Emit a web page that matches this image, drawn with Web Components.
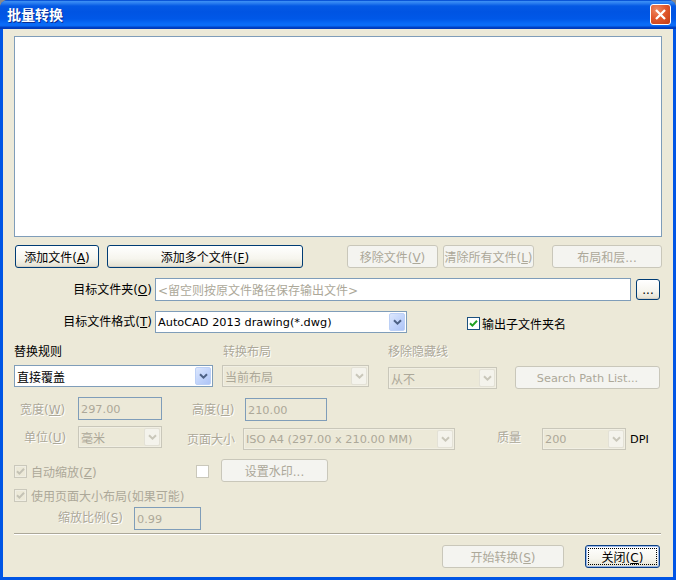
<!DOCTYPE html>
<html lang="zh">
<head>
<meta charset="utf-8">
<title>批量转换</title>
<style>
html,body{margin:0;padding:0;background:#8a8a8a;}
body{width:676px;height:580px;overflow:hidden;font:12px "DejaVu Sans","Noto Sans CJK SC",sans-serif;}
</style>
</head>
<body>
<batch-dialog></batch-dialog>
<script>
const FONT='"DejaVu Sans","Noto Sans CJK SC",sans-serif';
const CJK='"Noto Sans CJK SC","DejaVu Sans",sans-serif';

class XpWindow extends HTMLElement{
    constructor(){
        super();
        this.attachShadow({mode:'open'}).innerHTML=`
        <style>
        :host{display:block;width:676px;height:580px;}
        .frame{display:flex;flex-direction:column;height:100%;border-radius:8px 8px 0 0;overflow:hidden;background:#0055e5;}
        .title{flex:none;height:29px;box-sizing:border-box;display:flex;align-items:center;justify-content:space-between;padding:0 5px 1px 7px;
            background:linear-gradient(180deg,#0a55d8 0,#0a55d8 1px,#3d90f6 1px,#2c7ff0 3px,#0459e4 6px,#0054e3 12px,#0058e8 19px,#0a6cf8 24px,#0a6af4 26px,#0043c8 27px,#0038b8 29px);}
        .caption{font:bold 14px ${CJK};color:#fff;text-shadow:1px 1px 0 #0b2d92;line-height:16px;}
        .close{width:21px;height:21px;box-sizing:border-box;border:1px solid #fff;border-radius:3px;display:flex;align-items:center;justify-content:center;
            background:radial-gradient(circle at 30% 25%,#ee8a64 0,#e2592e 45%,#c23c14 100%);}
        .body{flex:1;margin:0 3px 3px;background:#ece9d8;min-height:0;}
        </style>
        <div class="frame">
            <div class="title">
                <span class="caption"><slot name="caption"></slot></span>
                <span class="close"><svg width="13" height="13" viewBox="0 0 13 13"><path d="M2 2 L11 11 M11 2 L2 11" stroke="#fff" stroke-width="2.3" fill="none"/></svg></span>
            </div>
            <div class="body"><slot></slot></div>
        </div>`;
    }
}
customElements.define('xp-window',XpWindow);

class XpButton extends HTMLElement{
    constructor(){
        super();
        this.attachShadow({mode:'open'}).innerHTML=`
        <style>
        :host{display:block;flex:none;box-sizing:border-box;height:23px;border:1px solid #003c74;border-radius:3px;
            background:linear-gradient(180deg,#fff 0,#f6f5ee 60%,#e3e0d0 100%);color:#000;
            box-shadow:inset 0 -1px 0 #d6d0c5;}
        :host([disabled]){border-color:#c9c7ba;background:#f4f4f0;color:#aca899;box-shadow:none;}
        :host([focused]){border-color:#0a3f84;box-shadow:inset 0 0 0 1px #9db9ea;}
        .in{display:flex;align-items:center;justify-content:center;height:100%;white-space:nowrap;font:12px ${FONT};}
        :host([focused]) .in{outline:1px dotted #000;outline-offset:-3px;}
        </style>
        <div class="in"><span><slot></slot></span></div>`;
    }
}
customElements.define('xp-button',XpButton);

class XpField extends HTMLElement{
    constructor(){
        super();
        this.attachShadow({mode:'open'}).innerHTML=`
        <style>
        :host{display:block;flex:none;box-sizing:border-box;height:23px;border:1px solid #7f9db9;background:#fff;color:#000;}
        :host([disabled]){background:#ece9d8;color:#aca899;}
        :host([hint]){color:#aca899;}
        .in{display:flex;align-items:center;height:100%;padding-left:2px;white-space:nowrap;font:12px ${FONT};}
        </style>
        <div class="in"><span><slot></slot></span></div>`;
    }
}
customElements.define('xp-field',XpField);

class XpSelect extends HTMLElement{
    constructor(){
        super();
        this.attachShadow({mode:'open'}).innerHTML=`
        <style>
        :host{display:block;flex:none;box-sizing:border-box;height:22px;border:1px solid #7f9db9;background:#fff;color:#000;padding:1px;}
        :host([disabled]){border-color:#c9c7ba;background:#ece9d8;color:#aca899;box-shadow:inset 0 0 0 1px #f1efe3;}
        .wrap{display:flex;height:100%;}
        .val{flex:1;display:flex;align-items:center;padding-left:1px;white-space:nowrap;overflow:hidden;font:12px ${FONT};}
        .btn{flex:none;width:16px;display:flex;align-items:center;justify-content:center;border:1px solid #bcd0f6;box-sizing:border-box;border-radius:2px;
            background:linear-gradient(135deg,#dce7fd 0,#c3d5fb 50%,#aec4f6 100%);color:#4d6185;}
        :host([disabled]) .btn{border-color:#e3e1d6;background:#f4f3ec;color:#c9c7ba;}
        </style>
        <div class="wrap">
            <div class="val"><span><slot></slot></span></div>
            <div class="btn"><svg width="9" height="7" viewBox="0 0 9 7"><path d="M1 1.2 L4.5 4.7 L8 1.2" fill="none" stroke="currentColor" stroke-width="2"/></svg></div>
        </div>`;
    }
}
customElements.define('xp-select',XpSelect);

class XpCheck extends HTMLElement{
    constructor(){
        super();
        this.attachShadow({mode:'open'}).innerHTML=`
        <style>
        :host{display:flex;flex:none;align-items:center;white-space:nowrap;font:12px ${FONT};color:#000;height:13px;}
        :host([disabled]){color:#aca899;}
        .box{flex:none;width:13px;height:13px;box-sizing:border-box;border:1px solid #1c5180;background:#fff;display:flex;align-items:center;justify-content:center;color:#21a121;}
        :host([disabled]) .box{border-color:#cac8bb;background:#ece9d8;color:#c4c2b5;box-shadow:inset 0 0 0 1px #f0eee3;}
        :host([blank]) .box{background:#fff;box-shadow:none;}
        .box svg{display:none;}
        :host([checked]) .box svg{display:block;}
        .txt{margin-left:var(--check-gap,4px);}
        :host([blank]) .txt{display:none;}
        </style>
        <span class="box"><svg width="9" height="9" viewBox="0 0 9 9"><path d="M1 4.2 L3.4 6.6 L8 1.8" fill="none" stroke="currentColor" stroke-width="2"/></svg></span>
        <span class="txt"><slot></slot></span>`;
    }
}
customElements.define('xp-check',XpCheck);

class XpLabel extends HTMLElement{
    constructor(){
        super();
        this.attachShadow({mode:'open'}).innerHTML=`
        <style>
        :host{display:block;flex:none;box-sizing:border-box;white-space:nowrap;font:12px ${FONT};color:#000;line-height:16px;}
        :host([disabled]){color:#aca899;text-shadow:1px 1px 0 #fff;}
        :host([end]){text-align:right;}
        </style>
        <slot></slot>`;
    }
}
customElements.define('xp-label',XpLabel);

class BatchDialog extends HTMLElement{
    constructor(){
        super();
        this.attachShadow({mode:'open'}).innerHTML=`
        <style>
        :host{display:block;}
        .form{display:flex;flex-direction:column;padding:7px 11px 0;}
        .row{display:flex;flex:none;align-items:flex-start;}
        .list{height:201px;width:648px;box-sizing:border-box;border:1px solid #7f9db9;background:#fff;}
        .rule{height:1px;width:647px;background:#aca899;border-bottom:1px solid #fff;margin-top:3px;}
        /* latin text is narrower than DejaVu at 12px in the reference */
        .en{font-size:11.3px;}
        </style>
        <xp-window>
            <span slot="caption">批量转换</span>
            <div class="form">
                <div class="list"></div>

                <div class="row" style="margin-top:8px;height:23px">
                    <xp-button style="width:84px;margin-left:1px">添加文件(<u>A</u>)</xp-button>
                    <xp-button style="width:196px;margin-left:8px">添加多个文件(<u>F</u>)</xp-button>
                    <xp-button disabled style="width:91px;margin-left:44px">移除文件(<u>V</u>)</xp-button>
                    <xp-button disabled style="width:91px;margin-left:5px">清除所有文件(<u>L</u>)</xp-button>
                    <xp-button disabled style="width:110px;margin-left:18px">布局和层...</xp-button>
                </div>

                <div class="row" style="margin-top:10px;height:23px;align-items:center">
                    <xp-label end style="width:138px">目标文件夹(<u>O</u>)</xp-label>
                    <xp-field hint style="width:476px;margin-left:3px">&lt;留空则按原文件路径保存输出文件&gt;</xp-field>
                    <xp-button style="width:24px;height:21px;margin-left:5px">...</xp-button>
                </div>

                <div class="row" style="margin-top:10px;height:22px;align-items:center">
                    <xp-label end style="width:138px">目标文件格式(<u>T</u>)</xp-label>
                    <xp-select style="width:252px;margin-left:3px"><span class="en">AutoCAD 2013 drawing(*.dwg)</span></xp-select>
                    <xp-check checked style="margin-left:60px;margin-top:2px;--check-gap:2px">输出子文件夹名</xp-check>
                </div>

                <div class="row" style="margin-top:11px;height:16px">
                    <xp-label style="width:209px">替换规则</xp-label>
                    <xp-label disabled style="width:165px">转换布局</xp-label>
                    <xp-label disabled>移除隐藏线</xp-label>
                </div>

                <div class="row" style="margin-top:5px;height:24px">
                    <xp-select style="width:199px">直接覆盖</xp-select>
                    <xp-select disabled style="width:147px;margin-left:9px">当前布局</xp-select>
                    <xp-select disabled style="width:109px;margin-left:19px;margin-top:2px">从不</xp-select>
                    <xp-button disabled style="width:145px;margin-left:18px;margin-top:1px"><span class="en">Search Path List...</span></xp-button>
                </div>

                <div class="row" style="margin-top:8px;height:24px">
                    <xp-label disabled style="width:58px;margin-left:6px;margin-top:5px">宽度(<u>W</u>)</xp-label>
                    <xp-field disabled style="width:84px"><span class="en">297.00</span></xp-field>
                    <xp-label disabled style="width:53px;margin-left:30px;margin-top:5px">高度(<u>H</u>)</xp-label>
                    <xp-field disabled style="width:82px;margin-top:1px"><span class="en">210.00</span></xp-field>
                </div>

                <div class="row" style="margin-top:5px;height:24px">
                    <xp-label disabled style="width:54px;margin-left:10px;margin-top:4px">单位(<u>U</u>)</xp-label>
                    <xp-select disabled style="width:84px">毫米</xp-select>
                    <xp-label disabled style="width:56px;margin-left:25px;margin-top:6px">页面大小</xp-label>
                    <xp-select disabled style="width:212px;margin-top:2px"><span class="en">ISO A4 (297.00 x 210.00 MM)</span></xp-select>
                    <xp-label disabled style="width:45px;margin-left:42px;margin-top:4px">质量</xp-label>
                    <xp-select disabled style="width:84px;margin-top:2px"><span class="en">200</span></xp-select>
                    <xp-label style="margin-left:4px;margin-top:5px"><span class="en">DPI</span></xp-label>
                </div>

                <div class="row" style="margin-top:9px;height:25px">
                    <xp-check disabled checked style="width:182px;margin-top:6px">自动缩放(<u>Z</u>)</xp-check>
                    <xp-check disabled blank style="margin-top:6px"></xp-check>
                    <xp-button disabled style="width:107px;margin-left:12px">设置水印...</xp-button>
                </div>

                <div class="row" style="height:23px">
                    <xp-check disabled checked style="margin-top:5px">使用页面大小布局(如果可能)</xp-check>
                </div>

                <div class="row" style="height:23px">
                    <xp-label disabled style="width:76px;margin-left:44px;margin-top:3px">缩放比例(<u>S</u>)</xp-label>
                    <xp-field disabled style="width:67px"><span class="en">0.99</span></xp-field>
                </div>

                <div class="rule"></div>

                <div class="row" style="margin-top:10px;height:23px">
                    <xp-button disabled style="width:122px;margin-left:428px">开始转换(<u>S</u>)</xp-button>
                    <xp-button focused style="width:75px;margin-left:21px">关闭(<u>C</u>)</xp-button>
                </div>
            </div>
        </xp-window>`;
    }
}
customElements.define('batch-dialog',BatchDialog);
</script>
</body>
</html>
